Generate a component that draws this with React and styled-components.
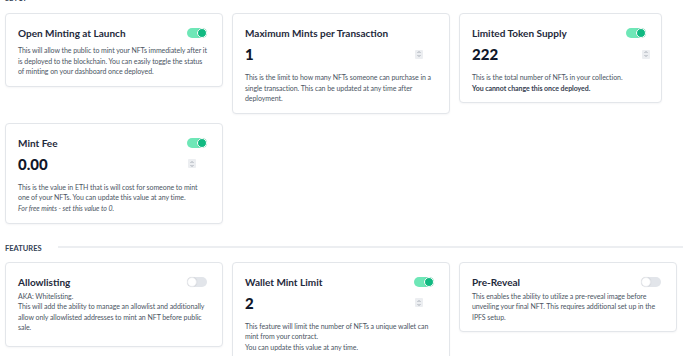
import React from "react";
import styled, { createGlobalStyle } from "styled-components";

const Global = createGlobalStyle`
  html, body { margin: 0; padding: 0; background: #ffffff; }
  body { font-family: Lato, "Noto Sans", "Liberation Sans", sans-serif; color: #1e293b; }
  * { box-sizing: border-box; }
`;

const Page = styled.div`
  width: 700px;
  height: 356px;
  overflow: hidden;
  padding: 0 0 0 5px;
`;

const SectionHeader = styled.div`
  display: flex;
  align-items: center;
  gap: 16px;
  padding-right: 17px;
  margin: ${(p) => p.$margin};
`;

const SectionTitle = styled.div`
  font-size: 7.5px;
  font-weight: 700;
  color: #334155;
  text-transform: uppercase;
  line-height: 10px;
`;

const SectionLine = styled.div`
  flex: 1;
  height: 2px;
  background: #eceef1;
  margin-top: -4px;
`;

const Grid = styled.div`
  display: flex;
  flex-wrap: wrap;
  align-items: flex-start;
  gap: 9px 9px;
`;

const Card = styled.div`
  width: ${(p) => p.$w || 218}px;
  min-height: ${(p) => p.$h || 0}px;
  background: #fff;
  border: 1px solid #e3e6ea;
  border-radius: 4px;
  box-shadow: 0 1px 2px rgba(15, 23, 42, 0.04);
  padding: 12px 13.5px 9px 12px;
`;

const CardHead = styled.div`
  display: flex;
  align-items: center;
  justify-content: space-between;
  height: 14px;
  padding-right: 1.5px;
`;

const Title = styled.div`
  font-size: 10px;
  font-weight: 700;
  color: #1e293b;
  line-height: 14px;
`;

const Toggle = styled.div`
  width: 20px;
  height: 10px;
  border-radius: 6px;
  background: ${(p) => (p.$on ? "#6ee7b7" : "#e2e5ea")};
  position: relative;
  flex-shrink: 0;
  &::after {
    content: "";
    position: absolute;
    top: 0px;
    ${(p) => (p.$on ? "right: 0px;" : "left: 0px;")}
    width: 10px;
    height: 10px;
    border-radius: 50%;
    box-sizing: border-box;
    background: ${(p) => (p.$on ? "#10b981" : "#ffffff")};
    border: ${(p) => (p.$on ? "1.5px solid #ffffff" : "1px solid #e8eaee")};
    box-shadow: 0 0 1px rgba(0, 0, 0, 0.15);
  }
`;

const ValueRow = styled.div`
  display: flex;
  align-items: center;
  justify-content: space-between;
  width: 178px;
  height: 20px;
  margin-top: 4px;
`;

const Value = styled.div`
  font-size: 15px;
  font-weight: 900;
  color: #0f172a;
  line-height: 20px;
`;

const StepperBox = styled.div`
  width: 8px;
  height: 9px;
  background: #eceef1;
  display: flex;
  align-items: center;
  justify-content: center;
  border-radius: 1px;
`;

const Desc = styled.div`
  margin-top: ${(p) => p.$mt}px;
  font-size: 7px;
  letter-spacing: -0.06px;
  line-height: 10.6px;
  color: #4b5563;
`;

const Strong = styled.span`
  font-weight: 700;
  color: #374151;
`;

const Em = styled.span`
  font-style: italic;
`;

const Stepper = () => (
  <StepperBox>
    <svg width="6" height="8" viewBox="0 0 6 8">
      <path d="M1.5 3 L3 1.5 L4.5 3" fill="none" stroke="#8a919c" strokeWidth="0.7" />
      <path d="M1.5 5 L3 6.5 L4.5 5" fill="none" stroke="#8a919c" strokeWidth="0.7" />
    </svg>
  </StepperBox>
);

const Setting = ({ title, toggle, value, w, h, children, descMt = 5 }) => (
  <Card $w={w} $h={h}>
    <CardHead>
      <Title>{title}</Title>
      {toggle !== undefined && <Toggle $on={toggle} />}
    </CardHead>
    {value !== undefined && (
      <ValueRow>
        <Value>{value}</Value>
        <Stepper />
      </ValueRow>
    )}
    <Desc $mt={value !== undefined ? 8 : descMt}>{children}</Desc>
  </Card>
);

export default function App() {
  return (
    <Page>
      <Global />
      <SectionHeader $margin="-6px 0 9px 0">
        <SectionTitle>Setup</SectionTitle>
        <SectionLine />
      </SectionHeader>
      <Grid>
        <Setting title="Open Minting at Launch" toggle={true} descMt={5}>
          This will allow the public to mint your NFTs immediately after it is deployed to the blockchain. You can
          easily toggle the status of minting on your dashboard once deployed.
        </Setting>
        <Setting title="Maximum Mints per Transaction" value="1">
          This is the limit to how many NFTs someone can purchase in a single transaction. This can be updated at
          any time after deployment.
        </Setting>
        <Setting title="Limited Token Supply" toggle={true} value="222" w={203}>
          This is the total number of NFTs in your collection.
          <br />
          <Strong>You cannot change this once deployed.</Strong>
        </Setting>
        <Setting title="Mint Fee" toggle={true} value="0.00">
          This is the value in ETH that is will cost for someone to mint one of your NFTs. You can update this value
          at any time.
          <br />
          <Em>For free mints - set this value to 0.</Em>
        </Setting>
      </Grid>
      <SectionHeader $margin="20px 0 8px 0">
        <SectionTitle>Features</SectionTitle>
        <SectionLine />
      </SectionHeader>
      <Grid>
        <Setting title="Allowlisting" toggle={false} descMt={2} h={85}>
          AKA: Whitelisting.
          <br />
          This will add the ability to manage an allowlist and additionally allow only allowlisted addresses to mint
          an NFT before public sale.
        </Setting>
        <Setting title="Wallet Mint Limit" toggle={true} value="2">
          This feature will limit the number of NFTs a unique wallet can mint from your contract.
          <br />
          You can update this value at any time.
          <br />
          <br />
        </Setting>
        <Setting title="Pre-Reveal" toggle={false} descMt={2}>
          This enables the ability to utilize a pre-reveal image before unveiling your final NFT. This requires
          additional set up in the IPFS setup.
        </Setting>
      </Grid>
    </Page>
  );
}
